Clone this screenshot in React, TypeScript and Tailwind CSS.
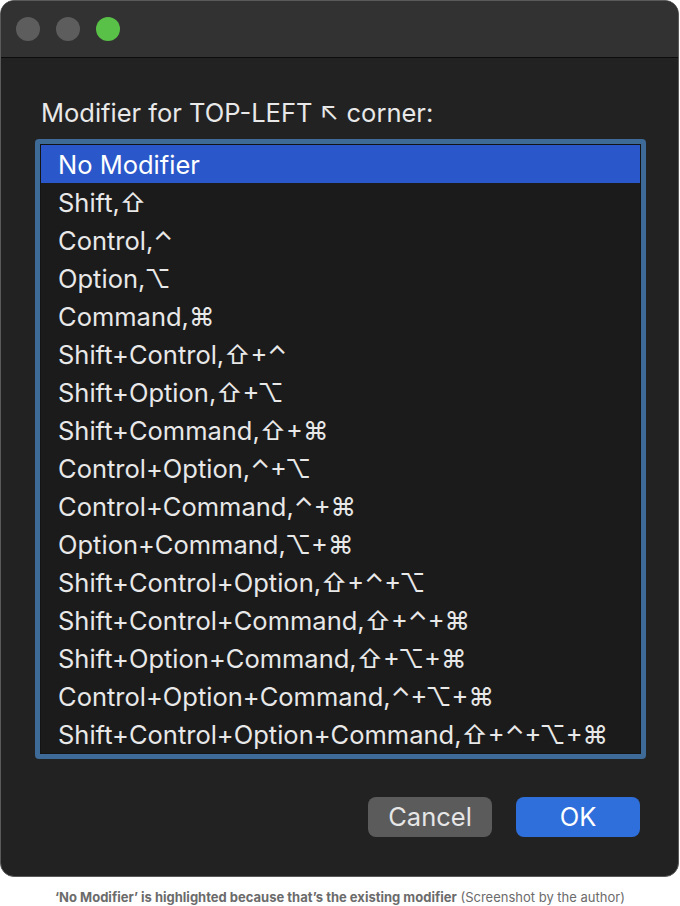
const options = [
  "No Modifier",
  "Shift,⇧",
  "Control,⌃",
  "Option,⌥",
  "Command,⌘",
  "Shift+Control,⇧+⌃",
  "Shift+Option,⇧+⌥",
  "Shift+Command,⇧+⌘",
  "Control+Option,⌃+⌥",
  "Control+Command,⌃+⌘",
  "Option+Command,⌥+⌘",
  "Shift+Control+Option,⇧+⌃+⌥",
  "Shift+Control+Command,⇧+⌃+⌘",
  "Shift+Option+Command,⇧+⌥+⌘",
  "Control+Option+Command,⌃+⌥+⌘",
  "Shift+Control+Option+Command,⇧+⌃+⌥+⌘",
];

const sysFont = "font-['Inter','DejaVu_Sans',sans-serif]";

export default function App() {
  return (
    <div className="h-[906px] w-[680px] bg-white">
      <div
        className={`flex h-[877px] w-[679px] flex-col overflow-hidden rounded-[14px] border border-[#5a5a5a] bg-[#222222] ${sysFont}`}
      >
        {/* title bar */}
        <div className="flex h-[57px] shrink-0 items-center gap-[16px] border-b border-[#0c0c0c] bg-[#323232] pl-[15px]">
          <span className="h-[24px] w-[24px] rounded-full bg-[#5d5d5d]" />
          <span className="h-[24px] w-[24px] rounded-full bg-[#5d5d5d]" />
          <span className="h-[24px] w-[24px] rounded-full bg-[#5ac148]" />
        </div>

        <div className="flex flex-1 flex-col px-[34px] pt-[41px]">
          <p className="pl-[6px] text-[25.5px] leading-[28px] text-[#e8e8e8]">
            Modifier for TOP-LEFT ↖ corner:
          </p>

          <div className="mt-[12px] w-[611px] rounded-[4px] bg-[#3d6a96] p-[5px]">
            <ul className="border border-[#141414] bg-[#1b1b1b]">
              {options.map((o, i) => (
                <li
                  key={o}
                  className={`h-[38px] pl-[17px] text-[25.5px] leading-[39px] whitespace-nowrap ${
                    i === 0 ? "bg-[#2a57c9] text-white" : "text-[#e8e8e8]"
                  }`}
                >
                  {o}
                </li>
              ))}
            </ul>
          </div>

          <div className="mt-[38px] flex justify-end gap-[24px] pr-[4px]">
            <button className="h-[40px] w-[124px] rounded-[8px] bg-[#5b5b5b] text-[25.5px] text-[#e6e6e6]">
              Cancel
            </button>
            <button className="h-[40px] w-[124px] rounded-[8px] bg-[#2f6fdb] text-[25.5px] text-white">
              OK
            </button>
          </div>
        </div>
      </div>

      <p className="mt-[11px] text-center font-['Inter',sans-serif] text-[13px] text-[#6b6b6b]">
        <span className="font-bold">‘No Modifier’ is highlighted because that’s the existing modifier</span>{" "}
        (Screenshot by the author)
      </p>
    </div>
  );
}
